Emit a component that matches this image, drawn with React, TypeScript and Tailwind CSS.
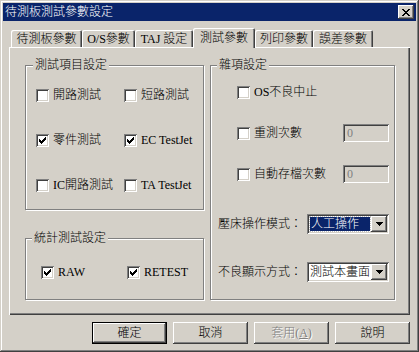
import React from "react";

const FONT = { fontFamily: '"Liberation Serif", "Noto Sans CJK TC", serif' };

const SUNKEN =
  "shadow-[inset_1px_1px_#808080,inset_-1px_-1px_#ffffff,inset_2px_2px_#404040,inset_-2px_-2px_#d4d0c8]";
const RAISED =
  "shadow-[inset_-1px_-1px_#404040,inset_1px_1px_#ffffff,inset_-2px_-2px_#808080,inset_2px_2px_#d4d0c8]";

function Check({ checked }: { checked?: boolean }) {
  return (
    <span className={`relative block w-[13px] h-[13px] bg-white shrink-0 ${SUNKEN}`}>
      {checked && (
        <svg
          className="absolute left-[3px] top-[3px]"
          width="7"
          height="7"
          viewBox="0 0 7 7"
          shapeRendering="crispEdges"
        >
          <path
            d="M0 2h1v3H0z M1 3h1v3H1z M2 4h1v3H2z M3 3h1v3H3z M4 2h1v3H4z M5 1h1v3H5z M6 0h1v3H6z"
            fill="#000"
          />
        </svg>
      )}
    </span>
  );
}

function CheckItem({ label, checked, w }: { label: string; checked?: boolean; w?: string }) {
  return (
    <div className={`flex items-center h-[16px] gap-[4px] ${w ?? ""}`}>
      <Check checked={checked} />
      <span className="text-[12px] leading-[16px] text-black whitespace-nowrap">{label}</span>
    </div>
  );
}

function Group({
  title,
  className,
  titleLeft,
  children,
}: {
  title: string;
  className: string;
  titleLeft: string;
  children: React.ReactNode;
}) {
  return (
    <div
      className={`relative border border-[#808080] shadow-[inset_1px_1px_#ffffff,1px_1px_#ffffff] ${className}`}
    >
      <span
        className={`absolute -top-[8px] ${titleLeft} px-[2px] bg-[#d4d0c8] text-[12px] leading-[14px] text-black`}
      >
        {title}
      </span>
      {children}
    </div>
  );
}

function Tab({ label, w, selected }: { label: string; w: string; selected?: boolean }) {
  return (
    <div
      className={`relative ${w} ${
        selected ? "h-[20px] -mb-[1px] z-10 pt-[1px]" : "h-[17px]"
      } bg-[#d4d0c8] rounded-t-[2px] flex items-start justify-center shadow-[inset_1px_1px_#ffffff,inset_-1px_0_#404040,inset_-2px_0_#808080]`}
    >
      <span className="text-[12px] leading-[16px] mt-[1px] text-black whitespace-nowrap">{label}</span>
    </div>
  );
}

function TextBox() {
  return (
    <div className={`ml-auto w-[46px] h-[18px] bg-[#d4d0c8] ${SUNKEN} pl-[4px] flex items-center`}>
      <span className="text-[12px] leading-[14px] text-[#808080]">0</span>
    </div>
  );
}

function DropBtn() {
  return (
    <div className={`w-[16px] h-[16px] bg-[#d4d0c8] ${RAISED} flex items-center justify-center shrink-0`}>
      <svg width="7" height="4" viewBox="0 0 7 4" shapeRendering="crispEdges">
        <path d="M0 0h7v1H0z M1 1h5v1H1z M2 2h3v1H2z M3 3h1v1H3z" fill="#000" />
      </svg>
    </div>
  );
}

function Combo({ value, selected }: { value: string; selected?: boolean }) {
  return (
    <div className={`w-[82px] h-[20px] bg-white ${SUNKEN} p-[2px] flex items-center`}>
      <div className="flex-1 h-[16px] flex items-center pl-[1px] pr-[1px] overflow-hidden">
        {selected ? (
          <div className="w-full h-[14px] bg-[#0a246a] outline outline-1 outline-dotted outline-[#c0c0c0] flex items-center overflow-hidden">
            <span className="text-[12px] leading-[14px] text-white whitespace-nowrap pl-[1px]">{value}</span>
          </div>
        ) : (
          <span className="text-[12px] leading-[14px] text-black whitespace-nowrap">{value}</span>
        )}
      </div>
      <DropBtn />
    </div>
  );
}

function Button({ children, def }: { children: React.ReactNode; def?: boolean }) {
  if (def) {
    return (
      <div className="w-[75px] h-[22px] border border-black">
        <div className={`w-full h-full bg-[#d4d0c8] ${RAISED} flex items-center justify-center`}>
          <span className="text-[12px] leading-[14px] text-black">{children}</span>
        </div>
      </div>
    );
  }
  return (
    <div className={`w-[75px] h-[22px] bg-[#d4d0c8] ${RAISED} flex items-center justify-center`}>
      {children}
    </div>
  );
}

export default function App() {
  return (
    <div
      style={FONT}
      className="font-light w-[419px] h-[352px] bg-[#d4d0c8] p-[3px] flex flex-col shadow-[inset_-1px_-1px_#404040,inset_1px_1px_#d4d0c8,inset_-2px_-2px_#808080,inset_2px_2px_#ffffff]"
    >
      {/* Title bar */}
      <div className="h-[18px] bg-[#0a246a] flex items-center justify-between pl-[2px] pr-[2px]">
        <span className="text-white text-[12px] leading-[14px]">待測板測試參數設定</span>
        <div className={`w-[16px] h-[14px] bg-[#d4d0c8] ${RAISED} flex items-center justify-center`}>
          <svg width="8" height="7" viewBox="0 0 8 7" shapeRendering="crispEdges">
            <path
              d="M0 0h2v1H0z M6 0h2v1H6z M1 1h2v1H1z M5 1h2v1H5z M2 2h4v1H2z M3 3h2v1H3z M2 4h4v1H2z M1 5h2v1H1z M5 5h2v1H5z M0 6h2v1H0z M6 6h2v1H6z"
              fill="#000"
            />
          </svg>
        </div>
      </div>

      {/* Tabs + panel */}
      <div className="mt-[7px] ml-[6px] w-[401px] flex flex-col">
        <div className="h-[19px] flex items-end pl-[2px]">
          <Tab label="待測板參數" w="w-[71px]" />
          <Tab label="O/S參數" w="w-[53px]" />
          <Tab label="TAJ 設定" w="w-[58px]" />
          <Tab label="測試參數" w="w-[62px]" selected />
          <Tab label="列印參數" w="w-[58px]" />
          <Tab label="誤差參數" w="w-[60px]" />
        </div>
        <div className="h-[268px] bg-[#d4d0c8] shadow-[inset_1px_1px_#ffffff,inset_-1px_-1px_#404040,inset_-2px_-2px_#808080] pl-[16px] pt-[18px] flex gap-[6px]">
          {/* Left column */}
          <div className="flex flex-col">
            <Group title="測試項目設定" className="w-[179px] h-[145px]" titleLeft="left-[7px]">
              <div className="flex flex-col pl-[10px] pt-[21px] gap-[29px]">
                <div className="flex">
                  <CheckItem label="開路測試" w="w-[88px]" />
                  <CheckItem label="短路測試" />
                </div>
                <div className="flex">
                  <CheckItem label="零件測試" checked w="w-[88px]" />
                  <CheckItem label="EC TestJet" checked />
                </div>
                <div className="flex">
                  <CheckItem label="IC開路測試" w="w-[88px]" />
                  <CheckItem label="TA TestJet" />
                </div>
              </div>
            </Group>
            <Group title="統計測試設定" className="w-[179px] h-[62px] mt-[28px]" titleLeft="left-[6px]">
              <div className="flex pl-[15px] pt-[25px]">
                <CheckItem label="RAW" checked w="w-[86px]" />
                <CheckItem label="RETEST" checked />
              </div>
            </Group>
          </div>

          {/* Right column */}
          <Group title="雜項設定" className="w-[185px] h-[235px]" titleLeft="left-[6px]">
            <div className="flex flex-col pl-[26px] pt-[17px] gap-[23px] w-[178px]">
              <div className="flex items-center h-[18px]">
                <CheckItem label="OS不良中止" />
              </div>
              <div className="flex items-center h-[18px]">
                <CheckItem label="重測次數" />
                <TextBox />
              </div>
              <div className="flex items-center h-[18px]">
                <CheckItem label="自動存檔次數" />
                <TextBox />
              </div>
            </div>
            <div className="flex flex-col pl-[7px] mt-[31px] gap-[28px]">
              <div className="flex items-center h-[20px]">
                <span className="w-[89px] text-[12px] leading-[14px] text-black whitespace-nowrap">壓床操作模式：</span>
                <Combo value="人工操作" selected />
              </div>
              <div className="flex items-center h-[20px]">
                <span className="w-[89px] text-[12px] leading-[14px] text-black whitespace-nowrap">不良顯示方式：</span>
                <Combo value="測試本畫面" />
              </div>
            </div>
          </Group>
        </div>
      </div>

      {/* Buttons */}
      <div className="mt-[7px] flex justify-end gap-[6px] pr-[6px]">
        <Button def>確定</Button>
        <Button>
          <span className="text-[12px] leading-[14px] text-black">取消</span>
        </Button>
        <Button>
          <span className="text-[12px] leading-[14px] text-[#808080] [text-shadow:1px_1px_0_#ffffff]">
            套用(<span className="underline">A</span>)
          </span>
        </Button>
        <Button>
          <span className="text-[12px] leading-[14px] text-black">說明</span>
        </Button>
      </div>
    </div>
  );
}
